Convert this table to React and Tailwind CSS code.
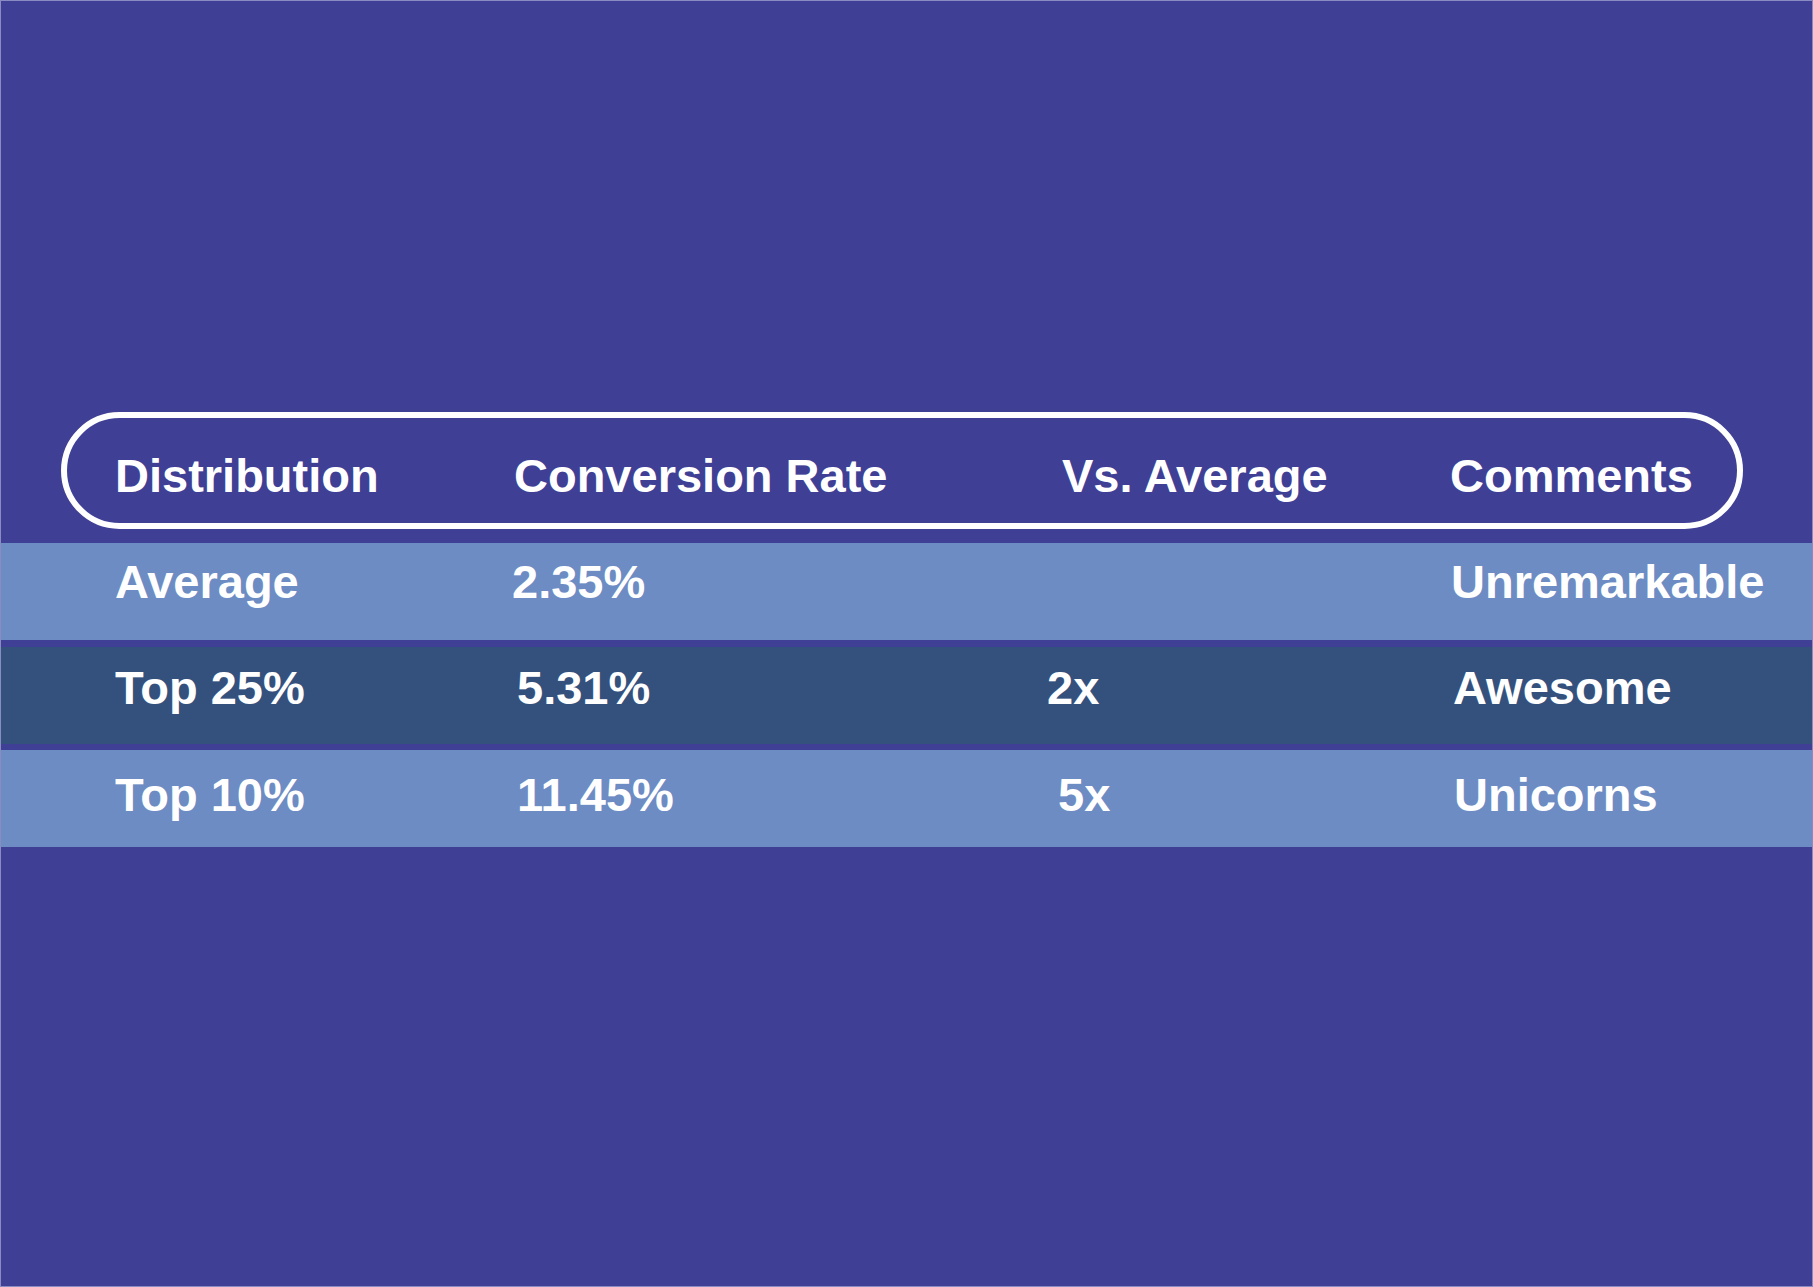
const header = [
  { label: "Distribution", cls: "" },
  { label: "Conversion Rate", cls: "ml-[2px]" },
  { label: "Vs. Average", cls: "ml-[14px]" },
  { label: "Comments", cls: "" },
];

const rows = [
  {
    bg: "bg-[#6d8cc3]",
    pad: "pt-[15px]",
    cells: [
      { text: "Average", cls: "ml-[1px]" },
      { text: "2.35%", cls: "ml-[1px]" },
      { text: "", cls: "" },
      { text: "Unremarkable", cls: "ml-[2px]" },
    ],
  },
  {
    bg: "bg-[#34517e]",
    pad: "pt-[17px]",
    cells: [
      { text: "Top 25%", cls: "ml-[1px]" },
      { text: "5.31%", cls: "ml-[6px]" },
      { text: "2x", cls: "" },
      { text: "Awesome", cls: "ml-[4px]" },
    ],
  },
  {
    bg: "bg-[#6d8cc3]",
    pad: "pt-[21px]",
    cells: [
      { text: "Top 10%", cls: "ml-[1px]" },
      { text: "11.45%", cls: "ml-[6px]" },
      { text: "5x", cls: "ml-[11px]" },
      { text: "Unicorns", cls: "ml-[5px]" },
    ],
  },
];

export default function App() {
  return (
    <div
      className="w-[1813px] h-[1287px] bg-[#3f4095] border border-[#8a8bc2] overflow-hidden text-white font-bold text-[47px] leading-none"
      style={{ fontFamily: '"Liberation Sans", Arial, sans-serif' }}
    >
      <div className="pt-[411px]">
        {/* Header pill */}
        <div className="ml-[60px] w-[1682px] h-[117px] rounded-full border-[6px] border-white pl-[48px] pt-[34px]">
          <div className="grid grid-cols-[397px_536px_402px_1fr]">
            {header.map((h) => (
              <span key={h.label} className={`whitespace-nowrap ${h.cls}`}>
                {h.label}
              </span>
            ))}
          </div>
        </div>

        {/* Data rows */}
        <div className="mt-[14px] flex flex-col">
          {rows.map((row, i) => (
            <div
              key={i}
              className={`h-[97px] pl-[113px] ${row.bg} ${row.pad} ${i === 1 ? "mt-[7px]" : ""} ${i === 2 ? "mt-[6px]" : ""}`}
            >
              <div className="grid grid-cols-[397px_536px_402px_1fr]">
                {row.cells.map((c, j) => (
                  <span key={j} className={`whitespace-nowrap ${c.cls}`}>
                    {c.text}
                  </span>
                ))}
              </div>
            </div>
          ))}
        </div>
      </div>
    </div>
  );
}
